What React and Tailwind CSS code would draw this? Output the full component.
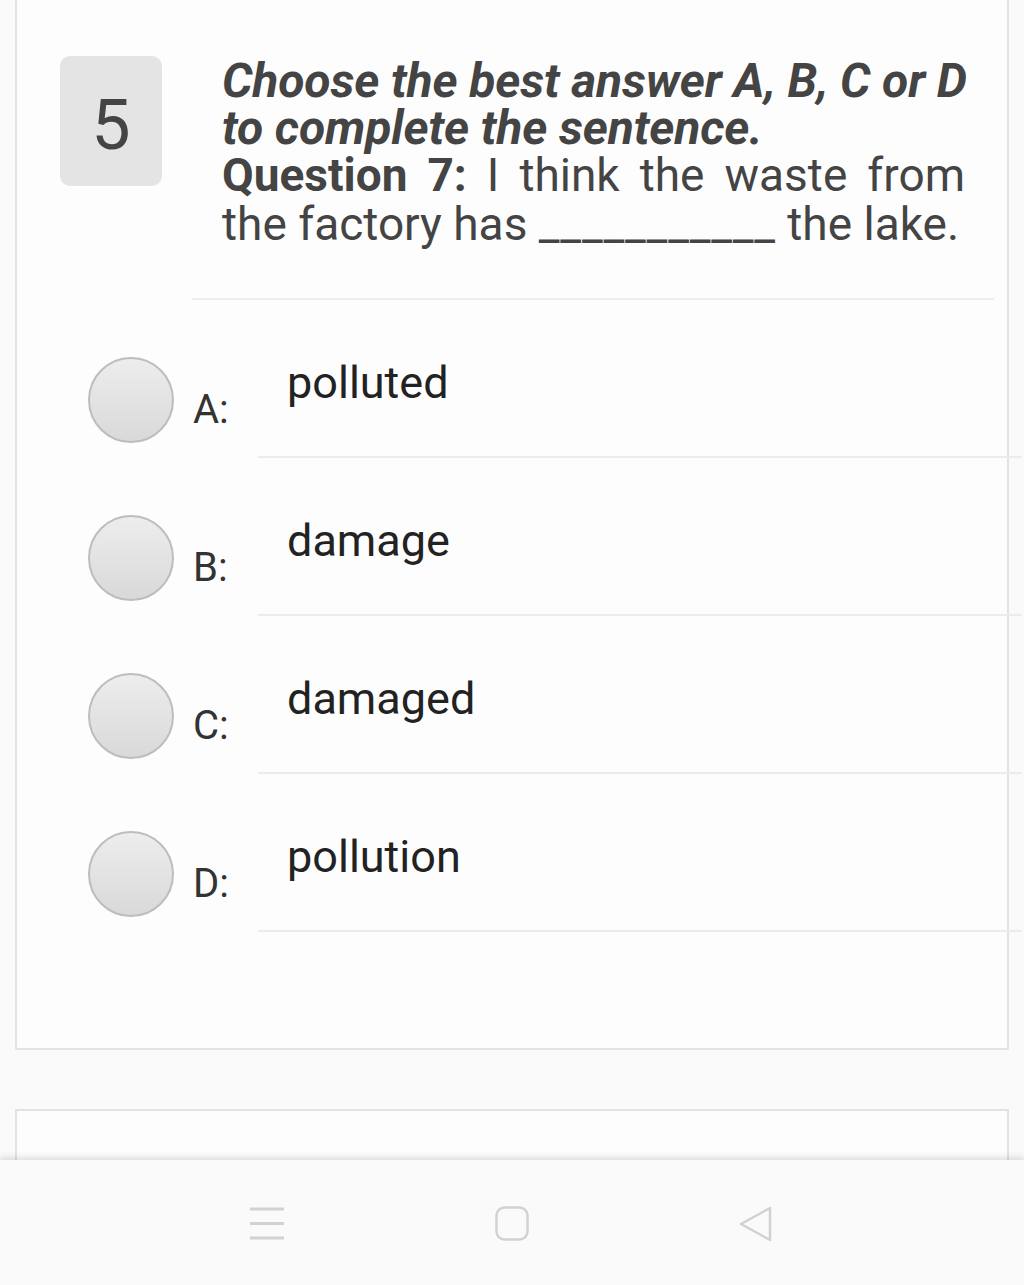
import React from "react";

const options = [
  { key: "A", text: "polluted" },
  { key: "B", text: "damage" },
  { key: "C", text: "damaged" },
  { key: "D", text: "pollution" },
];

function OptionRow({ option }) {
  return (
    <div className="flex h-[158px]">
      <div className="mt-[57px] ml-[71px] w-[86px] h-[86px] shrink-0 rounded-full border-2 border-[#bdbdbd] bg-gradient-to-b from-[#ededed] to-[#d9d9d9]" />
      <div className="mt-[90px] ml-[19px] w-[65px] shrink-0 text-[40px] leading-[40px] text-[#333]">
        {option.key}:
      </div>
      <div className="flex-1 mr-[-15px] border-b-2 border-[#ececec] pt-[60px] pl-[29px] text-[45px] leading-[45px] text-[#222]">
        {option.text}
      </div>
    </div>
  );
}

function NavBar() {
  return (
    <div className="relative z-10 h-[125px] shrink-0 bg-[#fafafa] shadow-[0_-3px_6px_rgba(0,0,0,0.12)] flex items-start pt-[46px] pl-[250px]">
      <svg width="34" height="35" viewBox="0 0 34 35" fill="none" stroke="#d2d2d2" strokeWidth="3">
        <line x1="0" y1="3" x2="34" y2="3" />
        <line x1="0" y1="17.5" x2="34" y2="17.5" />
        <line x1="0" y1="32" x2="34" y2="32" />
      </svg>
      <svg className="ml-[211px]" width="34" height="35" viewBox="0 0 34 35" fill="none" stroke="#d2d2d2" strokeWidth="2.5">
        <rect x="1.5" y="1.5" width="31" height="32" rx="8" />
      </svg>
      <svg className="ml-[209px]" width="34" height="36" viewBox="0 0 34 36" fill="none" stroke="#d2d2d2" strokeWidth="2.5" strokeLinejoin="round">
        <path d="M32 2 L32 34 L3 18 Z" />
      </svg>
    </div>
  );
}

export default function App() {
  return (
    <div
      className="w-[1024px] h-[1285px] overflow-hidden bg-[#fafafa] flex flex-col"
      style={{ fontFamily: "Roboto, 'Liberation Sans', sans-serif" }}
    >
      <div className="mx-[15px] h-[1050px] shrink-0 border-x-2 border-b-2 border-[#e3e3e3] bg-[#fdfdfd]">
        <div className="flex pt-[56px] pl-[43px]">
          <div className="w-[102px] h-[130px] shrink-0 rounded-[10px] bg-[#e4e4e4] flex items-center justify-center pt-[8px] text-[70px] text-[#444]">
            5
          </div>
          <div className="ml-[60px] mt-px w-[743px] text-[#444]">
            <p className="mr-[-14px] text-[48px] leading-[47px] font-bold italic tracking-[-0.003em]">
              Choose the best answer A, B, C or D to complete the sentence.
            </p>
            <p className="text-[46px] leading-[49px] text-justify">
              <span className="font-bold">Question 7:</span> I think the waste from the factory has{" "}
              <span className="tracking-[0.8px]">___________</span> the lake.
            </p>
          </div>
        </div>
        <div className="ml-[175px] mr-[13px] mt-[49px] h-[2px] bg-[#ededed]" />
        {options.map((o) => (
          <OptionRow key={o.key} option={o} />
        ))}
      </div>
      <div className="mx-[15px] mt-[59px] h-[51px] shrink-0 border-x-2 border-t-2 border-[#e3e3e3] bg-[#fdfdfd]" />
      <NavBar />
    </div>
  );
}
